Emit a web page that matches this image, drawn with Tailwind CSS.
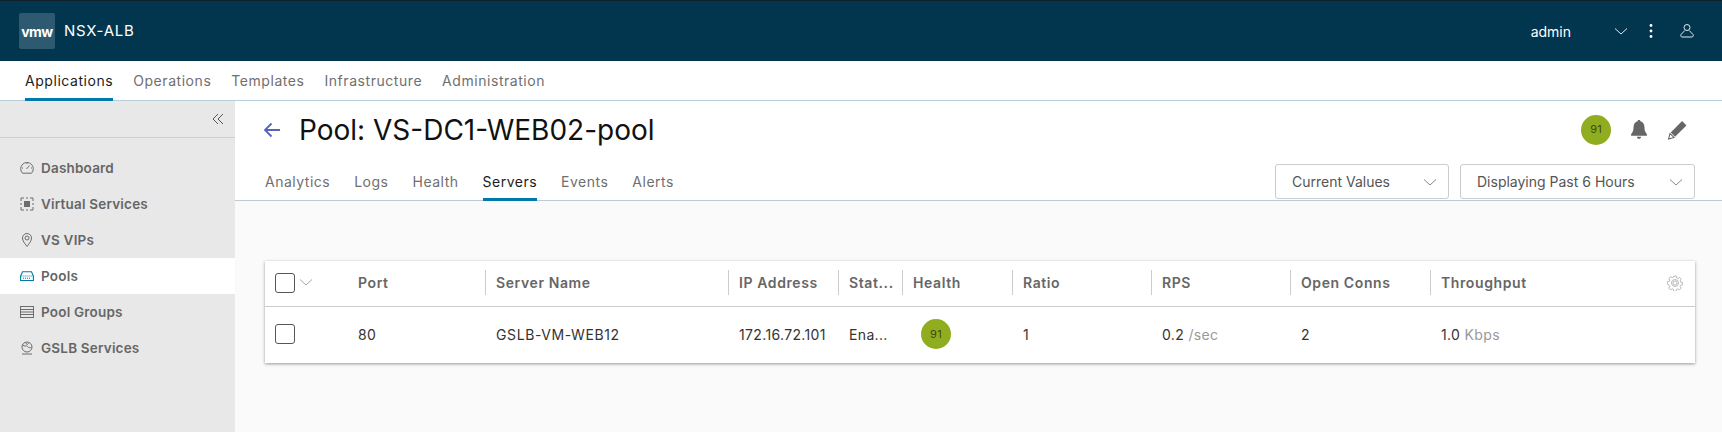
<!DOCTYPE html>
<html>
<head>
<meta charset="utf-8">
<script src="https://cdn.jsdelivr.net/npm/@tailwindcss/browser@4"></script>
</head>
<body class="h-[432px] overflow-hidden bg-white font-['Inter','Liberation_Sans',sans-serif]">
<div class="flex h-[432px] flex-col">
  <header class="flex h-[61px] shrink-0 items-center border-t border-t-[#10212b] bg-[#02364f] pl-[19px] pr-[28px] text-white">
    <div class="flex h-9 w-9 items-center justify-center rounded-[2px] bg-[#2d5a70] text-[14px] font-bold tracking-[-0.5px]">vmw</div>
    <div class="ml-[9px] text-[15px] tracking-[0.7px]">NSX-ALB</div>
    <div class="ml-auto text-[14px]">admin</div>
    <svg class="ml-[43px] h-3 w-3.5" viewBox="0 0 14 12" fill="none" stroke="#dfe7ea" stroke-width="1"><path d="M1 3.5 7 9l6-5.5"/></svg>
    <svg class="ml-[21px] h-4 w-1" viewBox="0 0 4 16" fill="#fff"><circle cx="2" cy="2.5" r="1.4"/><circle cx="2" cy="8" r="1.4"/><circle cx="2" cy="13.5" r="1.4"/></svg>
    <svg class="ml-[27px] h-4 w-[14px]" viewBox="0 0 14 16" fill="none" stroke="#dfe7ea" stroke-width="1"><circle cx="7" cy="4.5" r="3"/><path d="M4.8 7.5 1 11.5c-.6 1 0 2.5 1 2.5h10c1 0 1.6-1.500 1-2.500L9.200 7.500"/></svg>
  </header>

  <nav class="flex h-10 shrink-0 items-stretch gap-[20px] border-b border-[#b9ced6] pl-[25px] text-[14px] tracking-[0.55px] text-[#6f6f6f]">
    <a class="-mb-px flex items-center border-b-[3px] border-[#0079ad] pt-px text-[#1c1c1c]">Applications</a>
    <a class="flex items-center">Operations</a>
    <a class="flex items-center">Templates</a>
    <a class="flex items-center">Infrastructure</a>
    <a class="flex items-center">Administration</a>
  </nav>

  <div class="flex min-h-0 flex-1">
    <aside class="w-[235px] shrink-0 bg-[#e8e8e8]">
      <div class="flex h-[37px] items-center justify-end border-b border-[#cfcfcf] pr-[11px]">
        <svg class="h-3 w-3" viewBox="0 0 12 12" fill="none" stroke="#555" stroke-width="1"><path d="M6 1 1 6l5 5M11 1 6 6l5 5"/></svg>
      </div>
      <ul class="pt-[12px] text-[13.5px] font-semibold tracking-[0.2px] text-[#666]">
        <li class="flex h-9 items-center gap-[7px] pl-5">
          <svg class="h-[14px] w-[14px]" viewBox="0 0 14 14" fill="none" stroke="#6d6d6d" stroke-width="1"><path d="M2.500 12.200a6.300 6.300 0 1 1 9 0z"/><path d="m6.500 8 3-3.500M2 7h1M12 7h-1M7 2v1"/></svg>
          Dashboard
        </li>
        <li class="flex h-9 items-center gap-[7px] pl-5">
          <svg class="h-[14px] w-[14px]" viewBox="0 0 14 14" fill="none" stroke="#6d6d6d" stroke-width="1"><path d="M1 4V1h3M10 1h3v3M13 10v3h-3M4 13H1v-3M6 1h2M6 13h2M1 6v2M13 6v2"/><rect x="4" y="4" width="6" height="6" fill="#6d6d6d" stroke="none"/></svg>
          Virtual Services
        </li>
        <li class="flex h-9 items-center gap-[7px] pl-5">
          <svg class="h-[14px] w-[14px]" viewBox="0 0 14 14" fill="none" stroke="#6d6d6d" stroke-width="1"><path d="M7 13.500C4.500 10 2.500 8 2.500 5a4.500 4.500 0 0 1 9 0c0 3-2 5-4.500 8.500z"/><circle cx="7" cy="5" r="2"/></svg>
          VS VIPs
        </li>
        <li class="flex h-9 items-center gap-[7px] bg-white pl-5">
          <svg class="h-[14px] w-[14px]" viewBox="0 0 14 14" fill="none" stroke="#0079ad" stroke-width="1.100"><path d="M.6 11.500V7L2.500 2.800h9L13.400 7v4.500z"/><path d="M.6 7h12.800M3 9.200h8" stroke-dasharray="1 1"/></svg>
          Pools
        </li>
        <li class="flex h-9 items-center gap-[7px] pl-5">
          <svg class="h-[14px] w-[14px]" viewBox="0 0 14 14" fill="none" stroke="#6d6d6d" stroke-width="1"><rect x=".5" y="1.500" width="13" height="11"/><path d="M.5 4.500h13M.5 7h13M.5 9.500h13"/></svg>
          Pool Groups
        </li>
        <li class="flex h-9 items-center gap-[7px] pl-5">
          <svg class="h-[14px] w-[14px]" viewBox="0 0 14 14" fill="none" stroke="#6d6d6d" stroke-width="1"><circle cx="7" cy="6" r="5"/><path d="M2.500 4c2 2 4 0 5 1.500s3 1.500 4 .5M6 1.500C6 4 8 4 8.500 2M2 13h10"/></svg>
          GSLB Services
        </li>
      </ul>
    </aside>

    <main class="flex min-w-0 flex-1 flex-col">
      <div class="h-[100px] shrink-0 border-b border-[#b9ced6] bg-white">
        <div class="flex h-[57px] items-center pl-[28px] pr-[35px]">
          <svg class="h-4 w-[18px]" viewBox="0 0 18 16" fill="none" stroke="#5763bd" stroke-width="1.800"><path d="M17 8H2M8.500 1.500 2 8l6.500 6.500"/></svg>
          <h1 class="ml-[18px] text-[28px] font-normal leading-none text-[#111]">Pool: VS-DC1-WEB02-pool</h1>
          <div class="ml-auto flex h-[30px] w-[30px] items-center justify-center rounded-full bg-[#8fad1f] text-[11px] text-[#3f4a14]">91</div>
          <svg class="ml-[18px] h-5 w-5" viewBox="2.500 1 15 19" fill="#666"><path d="M10 1c-.8 0-1.300.5-1.300 1.300C6 3 4.800 5.200 4.800 8c0 3.500-1 5-2.300 6.500V16h15v-1.500C16.200 13 15.200 11.500 15.200 8c0-2.800-1.200-5-3.900-5.700C11.300 1.500 10.800 1 10 1z"/><path d="M8 17h4a2 2 0 0 1-4 0z"/></svg>
          <svg class="ml-[19px] h-5 w-[19px]" viewBox="1.500 1 17.500 17.500" fill="#666"><path d="M14.500 1.500 18.500 5.500 8 16 4 12z"/><path d="M3.400 13 7 16.600l-5 1.400z" fill="none" stroke="#666"/></svg>
        </div>
        <div class="flex h-[43px] items-stretch pl-[30px] pr-[27px] text-[14px] text-[#6f6f6f]">
          <div class="flex gap-[24px] tracking-[0.5px]">
            <a class="flex items-center pt-[3px]">Analytics</a>
            <a class="flex items-center pt-[3px]">Logs</a>
            <a class="flex items-center pt-[3px]">Health</a>
            <a class="flex items-center border-b-[3px] border-[#0079ad] pt-[6px] text-[#1c1c1c]">Servers</a>
            <a class="flex items-center pt-[3px]">Events</a>
            <a class="flex items-center pt-[3px]">Alerts</a>
          </div>
          <div class="ml-auto flex gap-[11px] pt-[6px] pb-[1px]">
            <div class="flex h-[35px] w-[174px] items-center justify-between rounded-[3px] border border-[#cccccc] bg-white pl-4 pr-[11px] text-[#555]">Current Values
              <svg class="h-3 w-[14px]" viewBox="0 0 14 12" fill="none" stroke="#8a8a8a"><path d="M1 3.500 7 9l6-5.500"/></svg></div>
            <div class="flex h-[35px] w-[235px] items-center justify-between rounded-[3px] border border-[#cccccc] bg-white pl-4 pr-[11px] text-[#555]">Displaying Past 6 Hours
              <svg class="h-3 w-[14px]" viewBox="0 0 14 12" fill="none" stroke="#8a8a8a"><path d="M1 3.500 7 9l6-5.500"/></svg></div>
          </div>
        </div>
      </div>

      <div class="flex-1 bg-[#fafafa] pl-[30px] pr-[27px] pt-[60px]">
        <div class="w-[1430px] bg-white text-[14px] tracking-[0.35px] shadow-[0_1px_3px_rgba(0,0,0,0.4)]">
          <div class="grid h-[46px] grid-cols-[82px_139px_243px_110px_64px_110px_139px_139px_140px_1fr] items-center border-b border-[#cccccc] pb-[2px] text-[14px] font-semibold tracking-[0.6px] text-[#666]">
            <div class="flex items-center pl-[10px]">
              <span class="h-5 w-5 rounded-[3px] border border-[#565656] bg-white"></span>
              <svg class="ml-[4px] -mt-[2px] h-3 w-[14px]" viewBox="0 0 14 12" fill="none" stroke="#a5a5a5"><path d="M1 3.500 7 9l6-5.500"/></svg>
            </div>
            <div class="pl-[11px]">Port</div>
            <div class="ml-[-1px] flex h-[25px] items-center border-l border-[#cccccc] pl-[10px]">Server Name</div>
            <div class="ml-[-1px] flex h-[25px] items-center border-l border-[#cccccc] pl-[10px]">IP Address</div>
            <div class="ml-[-1px] flex h-[25px] items-center border-l border-[#cccccc] pl-[10px]">Stat...</div>
            <div class="ml-[-1px] flex h-[25px] items-center border-l border-[#cccccc] pl-[10px]">Health</div>
            <div class="ml-[-1px] flex h-[25px] items-center border-l border-[#cccccc] pl-[10px]">Ratio</div>
            <div class="ml-[-1px] flex h-[25px] items-center border-l border-[#cccccc] pl-[10px]">RPS</div>
            <div class="ml-[-1px] flex h-[25px] items-center border-l border-[#cccccc] pl-[10px]">Open Conns</div>
            <div class="ml-[-1px] flex h-[25px] items-center justify-between border-l border-[#cccccc] pl-[10px] pr-[12px]">Throughput
              <svg class="h-4 w-4" viewBox="0 0 16 16" fill="none" stroke="#a8a8a8" stroke-width=".8"><circle cx="8" cy="8" r="2"/><circle cx="8" cy="8" r="3.500"/><path d="M6.800 1h2.400l.4 1.900 1.300.6 1.700-1 1.600 1.700-1 1.600.6 1.300 1.900.4v2.300l-1.900.4-.6 1.300 1 1.700-1.700 1.600-1.600-1-1.300.6-.4 1.900H6.800l-.4-1.900-1.300-.6-1.700 1-1.600-1.700 1-1.600-.6-1.300L.3 9.200V6.800l1.900-.4.6-1.300-1-1.700 1.700-1.600 1.600 1 1.300-.6z"/></svg>
            </div>
          </div>
          <div class="grid h-[56px] grid-cols-[82px_139px_243px_110px_64px_110px_139px_139px_140px_1fr] items-center pb-[2px] text-[#333]">
            <div class="pl-[10px]"><span class="block h-5 w-5 rounded-[3px] border border-[#565656] bg-white"></span></div>
            <div class="pl-[11px]">80</div>
            <div class="pl-[10px] tracking-[0.6px]">GSLB-VM-WEB12</div>
            <div class="pl-[10px]">172.16.72.101</div>
            <div class="pl-[10px]">Ena...</div>
            <div class="pl-[18px]"><span class="flex h-[30px] w-[30px] items-center justify-center rounded-full bg-[#8fad1f] text-[11px] text-[#3f4a14]">91</span></div>
            <div class="pl-[10px]">1</div>
            <div class="pl-[10px]">0.2 <span class="text-[#999]">/sec</span></div>
            <div class="pl-[10px]">2</div>
            <div class="pl-[10px]">1.0 <span class="text-[#999]">Kbps</span></div>
          </div>
        </div>
      </div>
    </main>
  </div>
</div>
</body>
</html>
